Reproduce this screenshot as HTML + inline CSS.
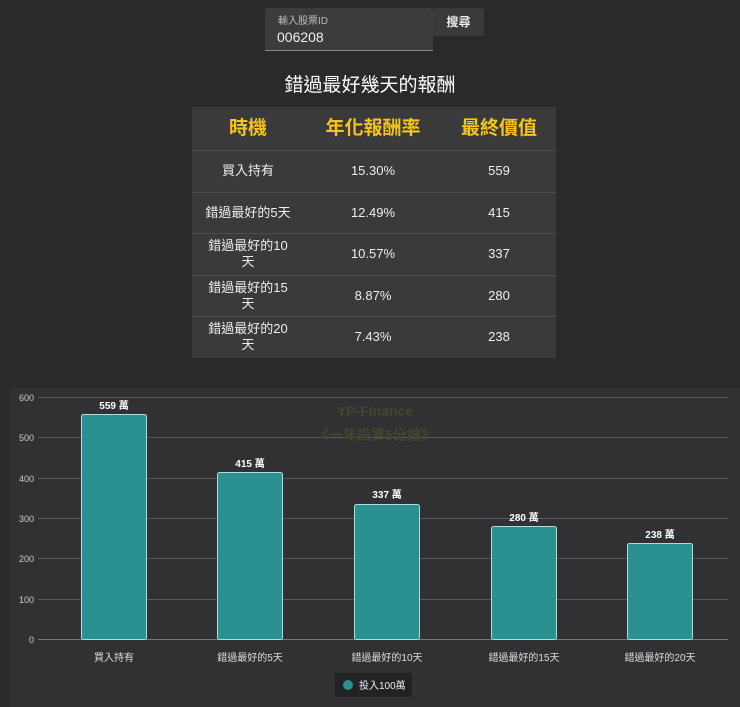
<!DOCTYPE html>
<html><head><meta charset="utf-8"><style>
body{margin:0;width:740px;height:707px;background:#2a2a2a;font-family:"Liberation Sans","Noto Sans CJK TC",sans-serif;color:#eee;position:relative;overflow:hidden}
.a{position:absolute}
table{border-collapse:collapse;position:absolute;left:192px;top:107px;width:364px;background:#3a3a3a}
td,th{text-align:center;font-size:13px;color:#eee;border-top:1px solid #4c4c4c;padding:0;line-height:16px}
th{color:#f5c518;font-size:19px;height:43px;border-top:none;font-weight:bold}
td{height:40.5px}
.c1{width:112px}.c2{width:138px}
</style></head><body>
<div class="a" style="left:265px;top:8px;width:168px;height:42px;background:#3c3c3c;border-bottom:1px solid #888;border-radius:3px 3px 0 0"></div>
<div class="a" style="left:278px;top:12px;font-size:10px;color:#bbb">輸入股票ID</div>
<div class="a" style="left:277px;top:29px;font-size:14px;color:#eee">006208</div>
<div class="a" style="left:433px;top:8px;width:51px;height:28px;background:#3a3a3a;border-radius:3px;font-size:12px;font-weight:bold;text-align:center;line-height:28px">搜尋</div>
<div class="a" style="left:0;width:740px;top:70px;text-align:center;font-size:19px;color:#fff">錯過最好幾天的報酬</div>
<table>
<tr><th class="c1">時機</th><th class="c2">年化報酬率</th><th>最終價值</th></tr>
<tr><td>買入持有</td><td>15.30%</td><td>559</td></tr>
<tr><td>錯過最好的5天</td><td>12.49%</td><td>415</td></tr>
<tr><td>錯過最好的10<br>天</td><td>10.57%</td><td>337</td></tr>
<tr><td>錯過最好的15<br>天</td><td>8.87%</td><td>280</td></tr>
<tr><td>錯過最好的20<br>天</td><td>7.43%</td><td>238</td></tr>
</table>
<div class="a" style="left:10px;top:388px;width:730px;height:319px;background:#313133"></div>
<svg class="a" style="left:0;top:0" width="740" height="707" font-family="Liberation Sans,Noto Sans CJK TC,sans-serif">
<g stroke="#5a5a5a" stroke-width="1">
<line x1="38" x2="728" y1="397.5" y2="397.5"/><line x1="38" x2="728" y1="437.5" y2="437.5"/><line x1="38" x2="728" y1="478.5" y2="478.5"/><line x1="38" x2="728" y1="518.5" y2="518.5"/><line x1="38" x2="728" y1="558.5" y2="558.5"/><line x1="38" x2="728" y1="599.5" y2="599.5"/><line x1="38" x2="728" y1="639.5" y2="639.5" stroke="#777"/>
</g>
<g font-size="9" fill="#ccc" text-anchor="end">
<text x="34" y="401">600</text><text x="34" y="441">500</text><text x="34" y="482">400</text><text x="34" y="522">300</text><text x="34" y="562">200</text><text x="34" y="603">100</text><text x="34" y="643">0</text>
</g>
<text x="375" y="416" font-size="14" font-weight="bold" fill="#45452f" text-anchor="middle">YP-Finance</text>
<text x="375" y="440" font-size="14" font-weight="bold" fill="#45452f" text-anchor="middle">《一年投資5分鐘》</text>
<g fill="#2a9090" stroke="#a8e0dc" stroke-width="1">
<rect x="81.5" y="414.5" width="65" height="225" rx="2"/>
<rect x="217.5" y="472.5" width="65" height="167" rx="2"/>
<rect x="354.5" y="504.5" width="65" height="135" rx="2"/>
<rect x="491.5" y="526.5" width="65" height="113" rx="2"/>
<rect x="627.5" y="543.5" width="65" height="96" rx="2"/>
</g>
<g font-size="10" font-weight="bold" fill="#fff" text-anchor="middle">
<text x="114" y="409">559 萬</text><text x="250" y="467">415 萬</text><text x="387" y="498">337 萬</text><text x="524" y="521">280 萬</text><text x="660" y="538">238 萬</text>
</g>
<g font-size="10" fill="#ddd" text-anchor="middle">
<text x="114" y="661">買入持有</text><text x="250" y="661">錯過最好的5天</text><text x="387" y="661">錯過最好的10天</text><text x="524" y="661">錯過最好的15天</text><text x="660" y="661">錯過最好的20天</text>
</g>
<rect x="335" y="673" width="77" height="24" fill="#222"/>
<circle cx="348" cy="685" r="5" fill="#2a9090"/>
<text x="359" y="689" font-size="10" fill="#eee">投入100萬</text>
</svg>
</body></html>
